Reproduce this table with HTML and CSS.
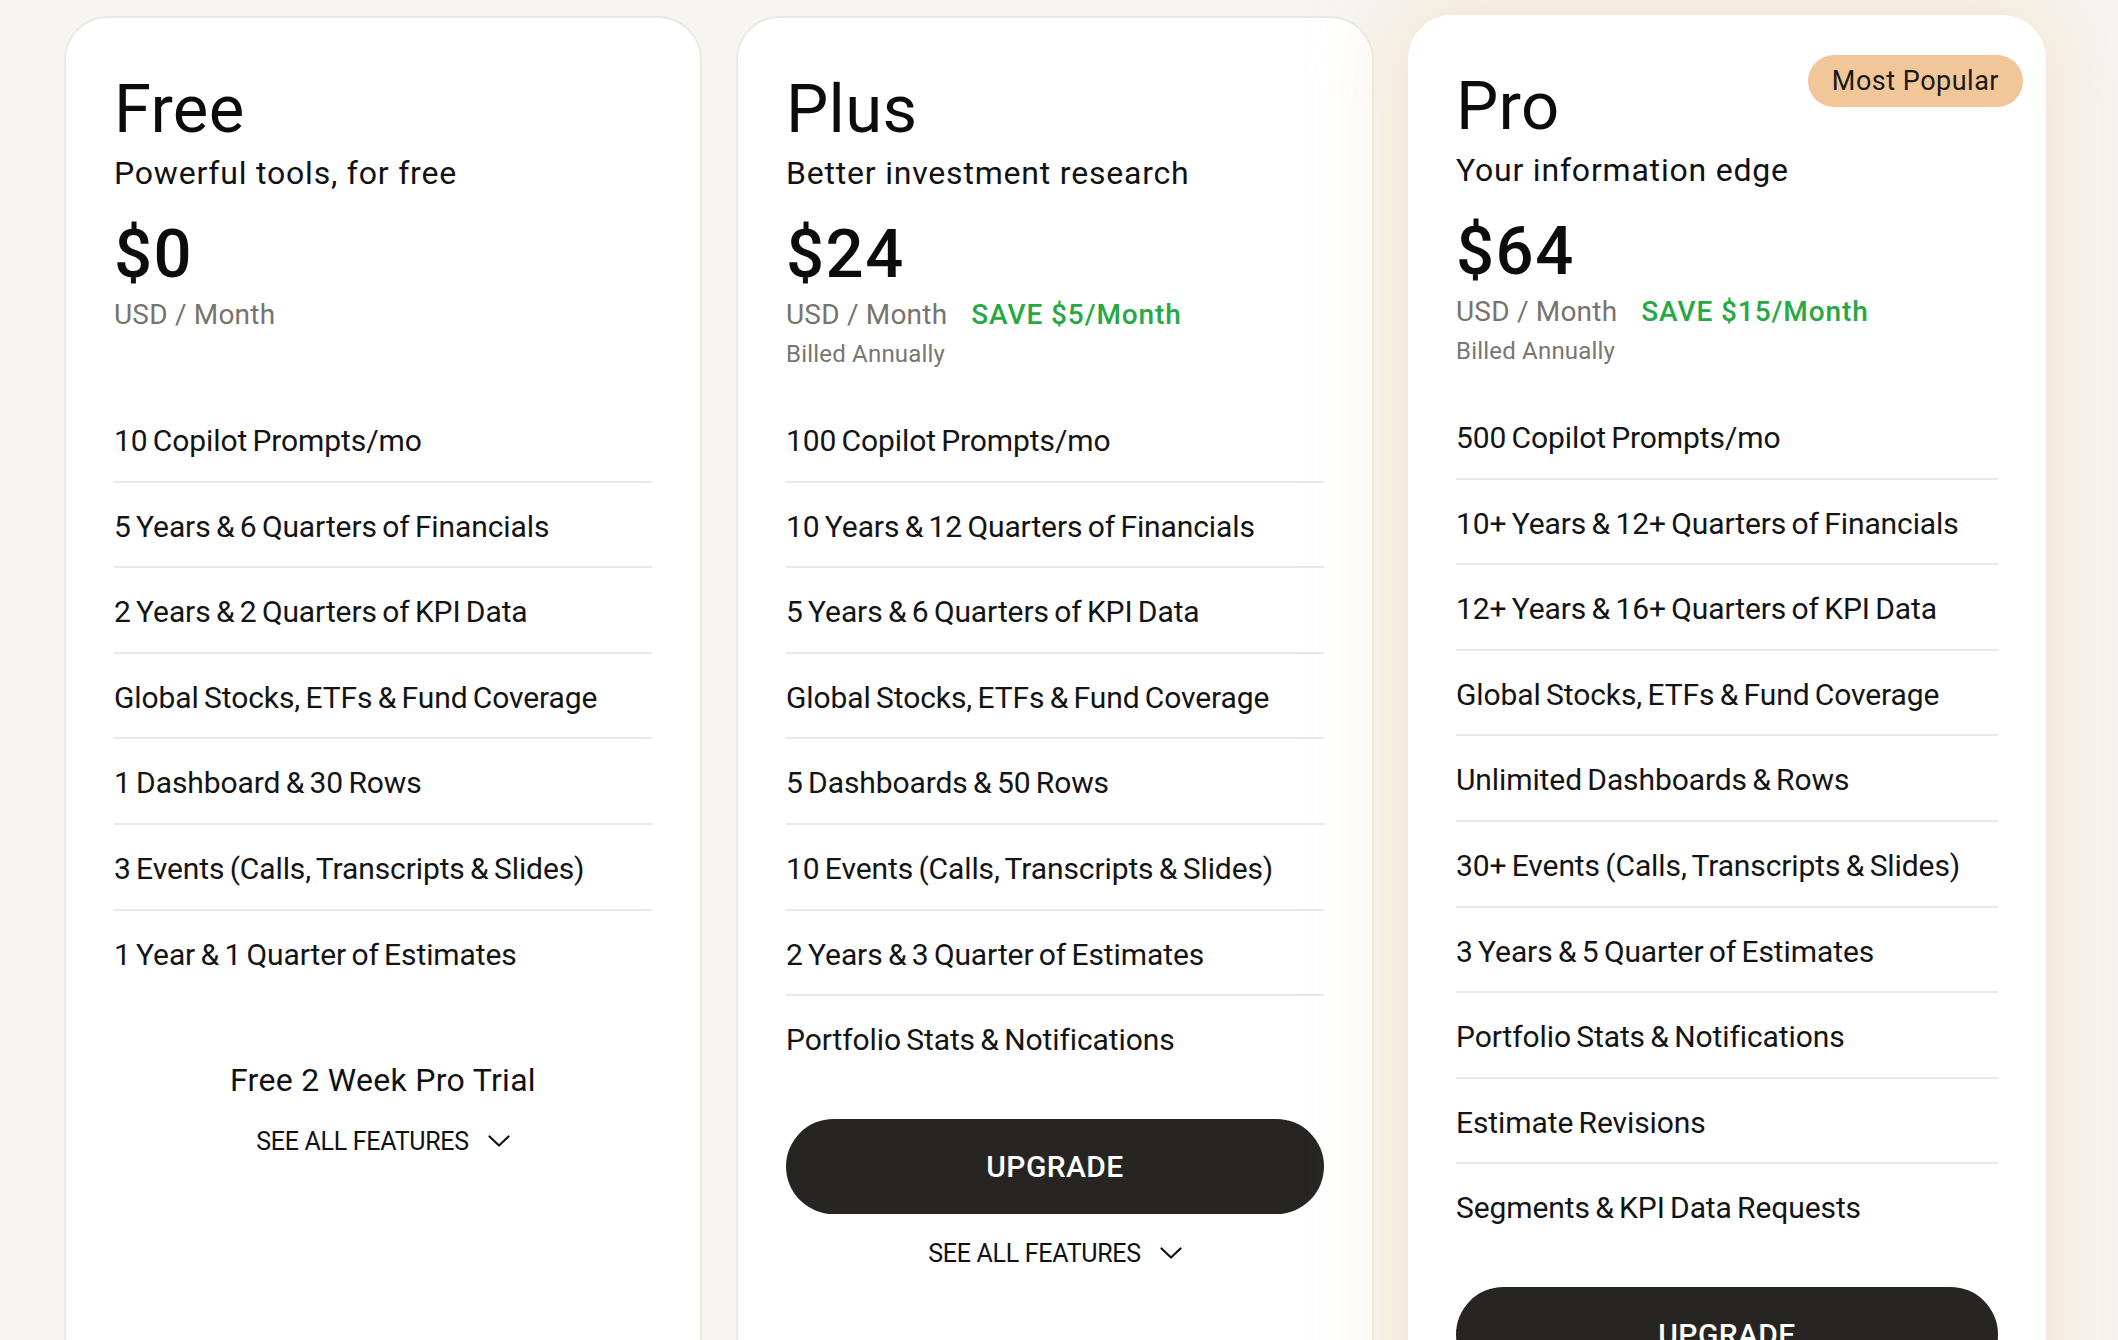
FILE: index.html
```html
<!DOCTYPE html>
<html lang="en">
<head>
<meta charset="utf-8">
<title>Pricing</title>
<link rel="stylesheet" href="styles.css">
</head>
<body>
<main class="plans">
  <section class="card">
    <h2 class="plan-name">Free</h2>
    <p class="tagline">Powerful tools, for free</p>
    <div class="pricing">
      <div class="price">$0</div>
      <div class="price-meta"><span class="unit">USD / Month</span></div>
    </div>
    <ul class="features">
      <li>10 Copilot Prompts/mo</li>
      <li>5 Years &amp; 6 Quarters of Financials</li>
      <li>2 Years &amp; 2 Quarters of KPI Data</li>
      <li>Global Stocks, ETFs &amp; Fund Coverage</li>
      <li>1 Dashboard &amp; 30 Rows</li>
      <li>3 Events (Calls, Transcripts &amp; Slides)</li>
      <li>1 Year &amp; 1 Quarter of Estimates</li>
    </ul>
    <p class="trial">Free 2 Week Pro Trial</p>
    <a class="see-all" href="#">SEE ALL FEATURES
      <svg class="chev" width="22" height="12" viewBox="0 0 22 12"><polyline points="1.5,1.5 11,10.5 20.5,1.5" fill="none" stroke="#111" stroke-width="2.2" stroke-linecap="round" stroke-linejoin="round"/></svg>
    </a>
  </section>

  <section class="card">
    <h2 class="plan-name">Plus</h2>
    <p class="tagline">Better investment research</p>
    <div class="pricing">
      <div class="price">$24</div>
      <div class="price-meta"><span class="unit">USD / Month</span><span class="save">SAVE $5/Month</span></div>
      <div class="billed">Billed Annually</div>
    </div>
    <ul class="features">
      <li>100 Copilot Prompts/mo</li>
      <li>10 Years &amp; 12 Quarters of Financials</li>
      <li>5 Years &amp; 6 Quarters of KPI Data</li>
      <li>Global Stocks, ETFs &amp; Fund Coverage</li>
      <li>5 Dashboards &amp; 50 Rows</li>
      <li>10 Events (Calls, Transcripts &amp; Slides)</li>
      <li>2 Years &amp; 3 Quarter of Estimates</li>
      <li>Portfolio Stats &amp; Notifications</li>
    </ul>
    <button class="upgrade">UPGRADE</button>
    <a class="see-all see-all-tight" href="#">SEE ALL FEATURES
      <svg class="chev" width="22" height="12" viewBox="0 0 22 12"><polyline points="1.5,1.5 11,10.5 20.5,1.5" fill="none" stroke="#111" stroke-width="2.2" stroke-linecap="round" stroke-linejoin="round"/></svg>
    </a>
  </section>

  <section class="card pro">
    <span class="badge">Most Popular</span>
    <h2 class="plan-name">Pro</h2>
    <p class="tagline">Your information edge</p>
    <div class="pricing">
      <div class="price">$64</div>
      <div class="price-meta"><span class="unit">USD / Month</span><span class="save">SAVE $15/Month</span></div>
      <div class="billed">Billed Annually</div>
    </div>
    <ul class="features">
      <li>500 Copilot Prompts/mo</li>
      <li>10+ Years &amp; 12+ Quarters of Financials</li>
      <li>12+ Years &amp; 16+ Quarters of KPI Data</li>
      <li>Global Stocks, ETFs &amp; Fund Coverage</li>
      <li>Unlimited Dashboards &amp; Rows</li>
      <li>30+ Events (Calls, Transcripts &amp; Slides)</li>
      <li>3 Years &amp; 5 Quarter of Estimates</li>
      <li>Portfolio Stats &amp; Notifications</li>
      <li>Estimate Revisions</li>
      <li>Segments &amp; KPI Data Requests</li>
    </ul>
    <button class="upgrade">UPGRADE</button>
    <a class="see-all see-all-tight" href="#">SEE ALL FEATURES
      <svg class="chev" width="22" height="12" viewBox="0 0 22 12"><polyline points="1.5,1.5 11,10.5 20.5,1.5" fill="none" stroke="#111" stroke-width="2.2" stroke-linecap="round" stroke-linejoin="round"/></svg>
    </a>
  </section>
</main>
</body>
</html>
```
FILE: styles.css
```css
* { box-sizing: border-box; }

html, body {
  margin: 0;
  padding: 0;
}

body {
  background: #f6f5f2;
  font-family: Roboto, "Liberation Sans", Arial, sans-serif;
  color: #141414;
  overflow: hidden;
}

.plans {
  display: flex;
  align-items: stretch;
  gap: 34px;
  padding: 16px 0 0 64px;
}

.card {
  position: relative;
  width: 638px;
  flex: 0 0 638px;
  background: #ffffff;
  border: 2px solid #ebe9e4;
  border-radius: 44px;
  padding: 53px 48px 80px 48px;
  display: flex;
  flex-direction: column;
}

.card.pro {
  border-color: transparent;
  padding: 51px 46px 80px 46px;
  margin-top: -1px;
  box-shadow: 0 0 70px 22px rgba(240, 222, 192, 0.55);
}

.plan-name {
  margin: 0;
  font-size: 67px;
  line-height: 76px;
  font-weight: 400;
  color: #0c0c0c;
  letter-spacing: 0.3px;
}

.tagline {
  margin: 6px 0 0;
  font-size: 32px;
  line-height: 40px;
  font-weight: 400;
  color: #111;
  letter-spacing: 0.8px;
}

.pricing {
  margin-top: 23px;
  min-height: 154px;
}

.price {
  font-size: 67px;
  line-height: 76px;
  font-weight: 500;
  color: #0c0c0c;
  letter-spacing: 1.5px;
}

.price-meta {
  margin-top: 5px;
  display: flex;
  gap: 24px;
  font-size: 28px;
  line-height: 36px;
}

.unit {
  color: #78736d;
  letter-spacing: 0.2px;
}

.save {
  color: #27a845;
  font-weight: 500;
  letter-spacing: 0.9px;
}

.billed {
  margin-top: 5px;
  font-size: 24px;
  line-height: 32px;
  color: #7a756f;
  letter-spacing: 0.2px;
}

.features {
  list-style: none;
  margin: 27px 0 0;
  padding: 0;
}

.features li {
  font-size: 30px;
  line-height: 35.6px;
  padding: 26px 0 22px;
  border-bottom: 2px solid #ebe9e4;
  color: #141414;
  letter-spacing: -0.1px;
  word-spacing: -2px;
}

.features li:last-child {
  border-bottom: none;
}

.trial {
  margin: 66px 0 0;
  text-align: center;
  font-size: 32px;
  line-height: 40px;
  color: #111;
  letter-spacing: 0.3px;
}

.see-all {
  margin-top: 26px;
  align-self: center;
  display: flex;
  align-items: center;
  gap: 19px;
  font-size: 25px;
  line-height: 32px;
  color: #111;
  text-decoration: none;
  letter-spacing: -0.3px;
}

.see-all-tight {
  margin-top: 24px;
}

.chev {
  display: block;
  margin-top: -2px;
}

.upgrade {
  margin-top: 39px;
  height: 95px;
  width: 100%;
  border: none;
  border-radius: 48px;
  background: #262522;
  color: #ffffff;
  font-family: Roboto, "Liberation Sans", Arial, sans-serif;
  font-size: 30px;
  font-weight: 500;
  letter-spacing: 0.4px;
  cursor: pointer;
}

.badge {
  position: absolute;
  top: 38px;
  right: 21px;
  height: 52px;
  padding: 0 24px;
  display: flex;
  align-items: center;
  border-radius: 26px;
  background: #f1c698;
  font-size: 27px;
  color: #1a1a1a;
  letter-spacing: 0.5px;
}
```
